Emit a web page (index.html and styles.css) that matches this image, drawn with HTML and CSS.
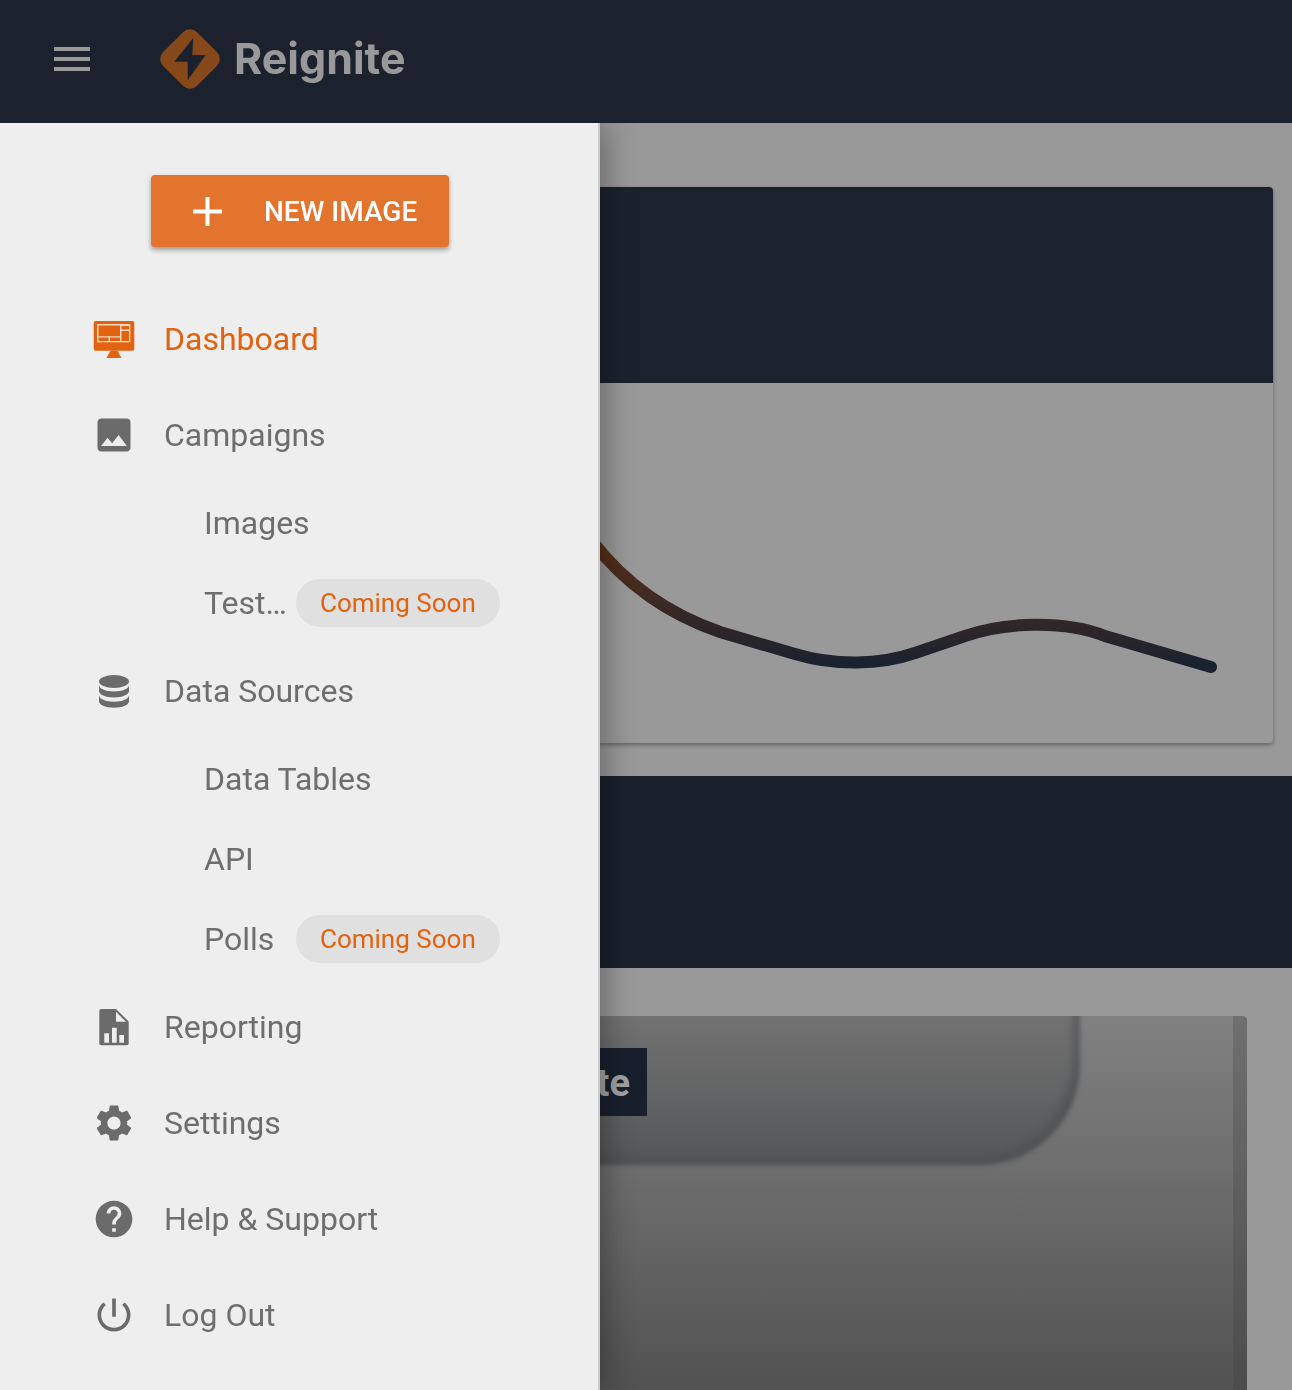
FILE: index.html
```html
<!DOCTYPE html>
<html lang="en">

<head>
    <meta charset="UTF-8">
    <meta name="viewport" content="width=device-width, initial-scale=1.0">
    <title>Reignite</title>
    <link rel="stylesheet" href="styles.css">
</head>

<body>
    <header class="topbar">
        <div class="burger"><span></span><span></span><span></span></div>
        <div class="logo">
            <svg class="logo-mark" viewBox="0 0 60 60">
                <rect x="6" y="6" width="48" height="48" rx="10" transform="rotate(45 30 30)" fill="#87481a" />
                <path d="M33.3 8.7 14.3 32.7H27.7V51L45.7 26H32.3z" fill="#1b222e" />
            </svg>
            <span class="logo-text">Reignite</span>
        </div>
    </header>

    <div class="main">
        <section class="content">
            <div class="card">
                <div class="card-head"></div>
                <svg class="chart" viewBox="20 383 1253 360">
                    <defs>
                        <linearGradient id="line" gradientUnits="userSpaceOnUse" x1="0" y1="548" x2="0" y2="664">
                            <stop offset="0" stop-color="#5a3018" />
                            <stop offset="1" stop-color="#1a2230" />
                        </linearGradient>
                    </defs>
                    <path d="M592 541C622 580 665 613 720 632L795 654C835 666 880 665 915 653L965 636C1005 622 1065 620 1105 636L1211 667"
                        fill="none" stroke="url(#line)" stroke-width="12" stroke-linecap="round" />
                </svg>
            </div>

            <div class="band"></div>

            <div class="promo">
                <div class="promo-shape">
                    <span class="promo-label">te</span>
                </div>
                <div class="promo-edge"></div>
            </div>
        </section>

        <aside class="drawer">
            <button class="new-btn">
                <svg class="plus" viewBox="0 0 29 29">
                    <path d="M12.5 0h4v12.5H29v4H16.5V29h-4V16.5H0v-4h12.5z" fill="#fff" />
                </svg>
                <span class="new-label">NEW IMAGE</span>
            </button>

            <nav class="nav">
                <a class="nav-item active">
                    <svg class="icon" viewBox="0 0 44 44">
                        <path d="M3.7 4H40.3a2 2 0 0 1 2 2V31.7a2 2 0 0 1-2 2H3.7a2 2 0 0 1-2-2V6a2 2 0 0 1 2-2z" fill="#e2620f" />
                        <path d="M18.5 33.7H25.5L29.500 41H14.500z" fill="#e2620f" />
                        <rect x="5" y="7" width="33.300" height="18.300" fill="#f3d9c6" />
                        <path d="M6.500 8.500H28V19.200H6.500zM29.500 9H37V12.500H29.500zM29.500 14H37V24H29.500zM6.500 20.500H16.500V24H6.500zM18 20.500H28V24H18z" fill="#e2620f" />
                    </svg>
                    Dashboard
                </a>

                <a class="nav-item">
                    <svg class="icon" viewBox="0 0 24 24">
                        <path d="M21 19V5c0-1.100-.9-2-2-2H5c-1.100 0-2 .9-2 2v14c0 1.100.9 2 2 2h14c1.100 0 2-.9 2-2zM8.500 13.500l2.500 3.010L14.500 12l4.500 6H5l3.500-4.500z" />
                    </svg>
                    Campaigns
                </a>
                <a class="sub-item">Images</a>
                <a class="sub-item"><span class="sub-name">Test…</span><span class="chip">Coming Soon</span></a>

                <a class="nav-item">
                    <svg class="icon" viewBox="0 0 44 44">
                        <ellipse cx="22" cy="12.500" rx="15" ry="6.500" />
                        <path d="M7 16c0 3.600 6.700 6.500 15 6.500s15-2.900 15-6.500v6c0 3.600-6.700 6.500-15 6.500S7 25.600 7 22z" />
                        <path d="M7 26.200c0 3.600 6.700 6.500 15 6.500s15-2.900 15-6.500v6c0 3.600-6.700 6.500-15 6.500S7 35.800 7 32.200z" />
                    </svg>
                    Data Sources
                </a>
                <a class="sub-item">Data Tables</a>
                <a class="sub-item">API</a>
                <a class="sub-item"><span class="sub-name">Polls</span><span class="chip">Coming Soon</span></a>

                <a class="nav-item">
                    <svg class="icon" viewBox="0 0 44 44">
                        <path d="M9.300 4H24L36.700 16.500V38.300a2 2 0 0 1-2 2H9.300a2 2 0 0 1-2-2V6a2 2 0 0 1 2-2z" />
                        <path d="M24 6.700 34 16.700H24zM12.300 28.300H17V37.700H12.300zM20 22.700H24.700V37.700H20zM27.300 30H32V37.700H27.300z" fill="#eee" />
                    </svg>
                    Reporting
                </a>
                <a class="nav-item">
                    <svg class="icon" viewBox="0 0 24 24">
                        <path d="M19.140 12.940c.04-.3.06-.61.06-.94 0-.32-.02-.64-.07-.94l2.030-1.580c.18-.14.23-.41.12-.61l-1.920-3.320c-.12-.22-.37-.29-.59-.22l-2.390.96c-.5-.38-1.030-.7-1.620-.94l-.36-2.540c-.04-.24-.24-.41-.48-.41h-3.840c-.24 0-.43.17-.47.41l-.36 2.540c-.59.24-1.130.57-1.620.94l-2.390-.96c-.22-.08-.47 0-.59.22L2.740 8.870c-.12.21-.08.47.12.61l2.030 1.580c-.05.3-.09.63-.09.94s.02.64.07.94l-2.030 1.580c-.18.14-.23.41-.12.61l1.920 3.320c.12.22.37.29.59.22l2.390-.96c.5.38 1.030.7 1.620.94l.36 2.540c.05.24.24.41.48.41h3.840c.24 0 .44-.17.47-.41l.36-2.540c.59-.24 1.130-.56 1.620-.94l2.390.96c.22.08.47 0 .59-.22l1.920-3.320c.12-.22.07-.47-.12-.61l-2.010-1.580zM12 15.600c-1.980 0-3.600-1.620-3.600-3.600s1.620-3.600 3.600-3.600 3.600 1.620 3.600 3.600-1.620 3.600-3.600 3.600z" />
                    </svg>
                    Settings
                </a>
                <a class="nav-item">
                    <svg class="icon" viewBox="0 0 24 24">
                        <path d="M12 2C6.480 2 2 6.480 2 12s4.480 10 10 10 10-4.480 10-10S17.520 2 12 2zm1 17h-2v-2h2v2zm2.070-7.750l-.9.920C13.450 12.900 13 13.500 13 15h-2v-.5c0-1.100.45-2.100 1.170-2.830l1.240-1.260c.37-.36.59-.86.59-1.410 0-1.100-.9-2-2-2s-2 .9-2 2H8c0-2.210 1.790-4 4-4s4 1.790 4 4c0 .88-.36 1.680-.93 2.250z" />
                    </svg>
                    Help &amp; Support
                </a>
                <a class="nav-item">
                    <svg class="icon" viewBox="0 0 24 24">
                        <path d="M13 3h-2v10h2V3zm4.830 2.170l-1.420 1.420C17.990 7.860 19 9.810 19 12c0 3.870-3.130 7-7 7s-7-3.130-7-7c0-2.190 1.010-4.140 2.580-5.420L6.170 5.170C4.230 6.820 3 9.260 3 12c0 4.970 4.030 9 9 9s9-4.030 9-9c0-2.740-1.230-5.180-3.170-6.830z" />
                    </svg>
                    Log Out
                </a>
            </nav>
        </aside>
    </div>
</body>

</html>
```

FILE: styles.css
```css
body {
    margin: 0;
    height: 1390px;
    overflow: hidden;
    font-family: Roboto, "Liberation Sans", sans-serif;
    background: #999;
}

.topbar {
    position: relative;
    z-index: 2;
    display: flex;
    align-items: center;
    height: 123px;
    padding-left: 54px;
    padding-bottom: 5px;
    box-sizing: border-box;
    background: #1b222e;
}

.burger {
    display: flex;
    flex-direction: column;
    gap: 6px;
    width: 36px;
    margin-right: 70px;
}

.burger span {
    height: 4px;
    background: #999;
}

.logo {
    display: flex;
    align-items: center;
    gap: 14px;
}

.logo-mark {
    width: 60px;
    height: 60px;
}

.logo-text {
    padding-bottom: 2px;
    font-family: Inter, sans-serif;
    font-size: 43px;
    font-weight: 700;
    color: #999;
    will-change: transform;
}

.main {
    position: relative;
    height: 1267px;
}

.content {
    padding-top: 64px;
}

.card {
    margin: 0 19px 33px 20px;
    border-radius: 4px;
    background: #999;
    box-shadow: 0 2px 4px rgba(0, 0, 0, 0.35);
}

.card-head {
    height: 196px;
    border-radius: 4px 4px 0 0;
    background: #1b222e;
}

.chart {
    display: block;
    width: 100%;
    height: 360px;
}

.band {
    height: 192px;
    background: #1a212d;
}

.promo {
    position: relative;
    height: 374px;
    margin: 48px 45px 0;
    border-radius: 4px 4px 0 0;
    overflow: hidden;
    background: linear-gradient(#818181, #525252);
}

.promo-shape {
    position: relative;
    display: flex;
    align-items: flex-start;
    justify-content: flex-end;
    height: 149px;
    margin-right: 167px;
    padding: 32px 433px 0 0;
    box-sizing: border-box;
}

/* soft edged blob behind the label */
.promo-shape::before {
    content: "";
    position: absolute;
    top: -8px;
    left: -8px;
    right: 0;
    bottom: 0;
    border-bottom-right-radius: 100px;
    background: linear-gradient(#747474, #555658);
    box-shadow: inset -7px -7px 7px rgba(78, 80, 82, 0.7);
    filter: blur(2px);
}

.promo-label {
    position: relative;
    width: 130px;
    height: 68px;
    padding-right: 17px;
    font-size: 38px;
    font-weight: 700;
    line-height: 70px;
    text-align: right;
    color: #a3a3a3;
    background: #18202e;
}

.promo-edge {
    position: absolute;
    top: 0;
    right: 0;
    bottom: 0;
    width: 14px;
    border-top-right-radius: 4px;
    background: rgba(60, 60, 60, 0.25);
}

.drawer {
    position: absolute;
    top: 0;
    left: 0;
    bottom: 0;
    width: 600px;
    padding-top: 52px;
    box-sizing: border-box;
    background: #eee;
    box-shadow: inset -2px 0 #cbcbcb, 6px 0 30px rgba(0, 0, 0, 0.32);
}

.new-btn {
    display: flex;
    align-items: center;
    gap: 42px;
    width: 298px;
    height: 72px;
    margin: 0 auto 44px;
    padding: 0 0 0 42px;
    border: none;
    border-radius: 4px;
    font-family: inherit;
    font-size: 28px;
    font-weight: 500;
    color: #fff;
    background: #e2742d;
    box-shadow: 0 3px 5px rgba(0, 0, 0, 0.35);
}

.new-label {
    will-change: transform;
}

.plus {
    width: 29px;
    height: 29px;
}

/* own layer: text comes out with grey antialiasing, as in the app */
.nav {
    will-change: transform;
}

.nav-item {
    display: flex;
    align-items: center;
    gap: 28px;
    height: 96px;
    padding-left: 92px;
    font-size: 32px;
    color: #6e6e6e;
}

.nav-item.active {
    color: #e2620f;
}

.icon {
    width: 44px;
    height: 44px;
    fill: #6b6b6b;
}

.sub-item {
    display: flex;
    align-items: center;
    height: 80px;
    padding-left: 204px;
    font-size: 32px;
    color: #6e6e6e;
}

.sub-name {
    width: 92px;
}

.chip {
    height: 48px;
    padding: 0 24px;
    border-radius: 24px;
    font-size: 26px;
    line-height: 48px;
    color: #e2620f;
    background: #e0e0e0;
}
```
